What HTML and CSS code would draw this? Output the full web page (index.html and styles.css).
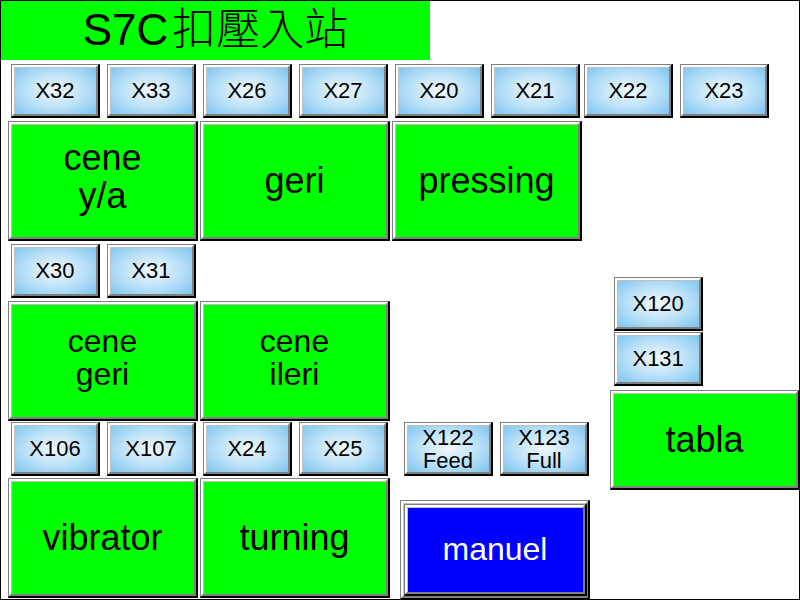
FILE: index.html
```html
<!DOCTYPE html>
<html lang="zh-Hant">
<head>
<meta charset="utf-8">
<meta name="viewport" content="width=device-width, initial-scale=1">
<title>S7C扣壓入站</title>
<link rel="stylesheet" href="styles.css">
</head>
<body>
<main class="panel">
  <h1 class="title">S7C<span class="title-han">扣壓入站</span></h1>

  <div class="row">
    <section class="station">
      <div class="sensors"><button class="key sensor">X32</button><button class="key sensor">X33</button></div>
      <button class="key action two-line">cene<br>y/a</button>
    </section>
    <section class="station">
      <div class="sensors"><button class="key sensor">X26</button><button class="key sensor">X27</button></div>
      <button class="key action">geri</button>
    </section>
    <section class="station">
      <div class="sensors"><button class="key sensor">X20</button><button class="key sensor">X21</button></div>
      <button class="key action">pressing</button>
    </section>
    <section class="station">
      <div class="sensors sensors-only"><button class="key sensor">X22</button><button class="key sensor">X23</button></div>
    </section>
  </div>

  <div class="lower">
    <div class="jaws">
      <section class="station">
        <div class="sensors"><button class="key sensor">X30</button><button class="key sensor">X31</button></div>
        <button class="key action compact">cene<br>geri</button>
      </section>
      <section class="station station-end">
        <button class="key action compact">cene<br>ileri</button>
      </section>
      <section class="station tight">
        <div class="sensors"><button class="key sensor">X106</button><button class="key sensor">X107</button></div>
        <button class="key action">vibrator</button>
      </section>
      <section class="station tight">
        <div class="sensors"><button class="key sensor">X24</button><button class="key sensor">X25</button></div>
        <button class="key action">turning</button>
      </section>
    </div>

    <section class="feed">
      <div class="sensors"><button class="key sensor">X122<br>Feed</button><button class="key sensor">X123<br>Full</button></div>
      <button class="key mode"><span class="key mode-face">manuel</span></button>
    </section>

    <section class="table-unit">
      <button class="key sensor">X120</button>
      <button class="key sensor">X131</button>
      <button class="key action short">tabla</button>
    </section>
  </div>
</main>
</body>
</html>
```

FILE: styles.css
```css
* {
  box-sizing: border-box;
}

body {
  margin: 0;
  background: #fff;
  color: #000;
  font-family: "Liberation Sans", "Noto Sans CJK TC", sans-serif;
}

.panel {
  min-height: 100vh;
  border: 1px solid #000;
}

.title {
  width: 53.75%;
  height: 59px;
  margin: 0;
  background: #0f0;
  font-size: 44px;
  font-weight: 400;
  line-height: 58px;
  text-align: center;
  white-space: nowrap;
}

.title-han {
  margin-left: 4px;
  font-family: "Noto Sans CJK TC", sans-serif;
  font-size: 44px;
  font-weight: 300;
  line-height: 1;
}

.row {
  display: grid;
  grid-template-columns: 190fr 190fr 190fr 185fr;
  gap: 2px;
  padding: 4px 30px 0 7px;
}

.station {
  display: flex;
  flex-direction: column;
  gap: 3px;
}

.station-end {
  justify-content: flex-end;
}

.tight {
  gap: 2px;
}

.sensors {
  display: grid;
  grid-template-columns: 1fr 1fr;
  gap: 7px;
  padding: 0 2px 0 3px;
}

.sensors-only {
  padding: 0;
}

/* Raised key: hard outer edge plus an inner bevel */
.key {
  position: relative;
  display: flex;
  align-items: center;
  justify-content: center;
  margin: 0;
  padding: 0;
  border-style: solid;
  border-width: 1px 2px 2px 1px;
  border-color: #808080 #000 #000 #808080;
  border-radius: 0;
  color: #000;
  font-family: inherit;
  text-align: center;
}

.key::before {
  content: "";
  position: absolute;
  inset: 0;
  border: 2px solid;
  border-color: #fff #808080 #808080 #fff;
  box-shadow: inset 1px 1px #c0c0c0;
  pointer-events: none;
}

.sensor {
  height: 54px;
  background: radial-gradient(ellipse farthest-corner, #f2f9fb 0%, #b9e0f8 50%, #74c0ee 100%);
  font-size: 22px;
  line-height: 23px;
}

.action {
  min-height: 120px;
  background: #0f0;
  font-size: 36px;
  line-height: 38px;
}

.two-line {
  padding-bottom: 8px;
}

.compact {
  padding-bottom: 6px;
  font-size: 32px;
  line-height: 33px;
}

.short {
  min-height: 100px;
}

.lower {
  display: flex;
  padding: 3px 0 0 7px;
}

.jaws {
  display: grid;
  flex: 382 1 0;
  grid-template-columns: 1fr 1fr;
  gap: 1px 2px;
}

.feed {
  display: flex;
  flex: 190 1 0;
  flex-direction: column;
  justify-content: flex-end;
  gap: 24px;
  margin: 0 0 -2px 10px;
}

.feed .sensors {
  padding: 0 1px 0 4px;
}

.mode {
  align-items: stretch;
  min-height: 100px;
  padding: 3px 1px 2px 3px;
  background: #00f;
}

.mode-face {
  flex: 1;
  background: #00f;
  color: #fff;
  font-size: 32px;
}

.table-unit {
  display: flex;
  flex: 190 1 0;
  flex-direction: column;
  gap: 1px;
  margin: 33px -1px 0 20px;
}

.table-unit .sensor {
  width: 47%;
  margin-left: 4px;
}

.table-unit .action {
  margin-top: 3px;
}
```
